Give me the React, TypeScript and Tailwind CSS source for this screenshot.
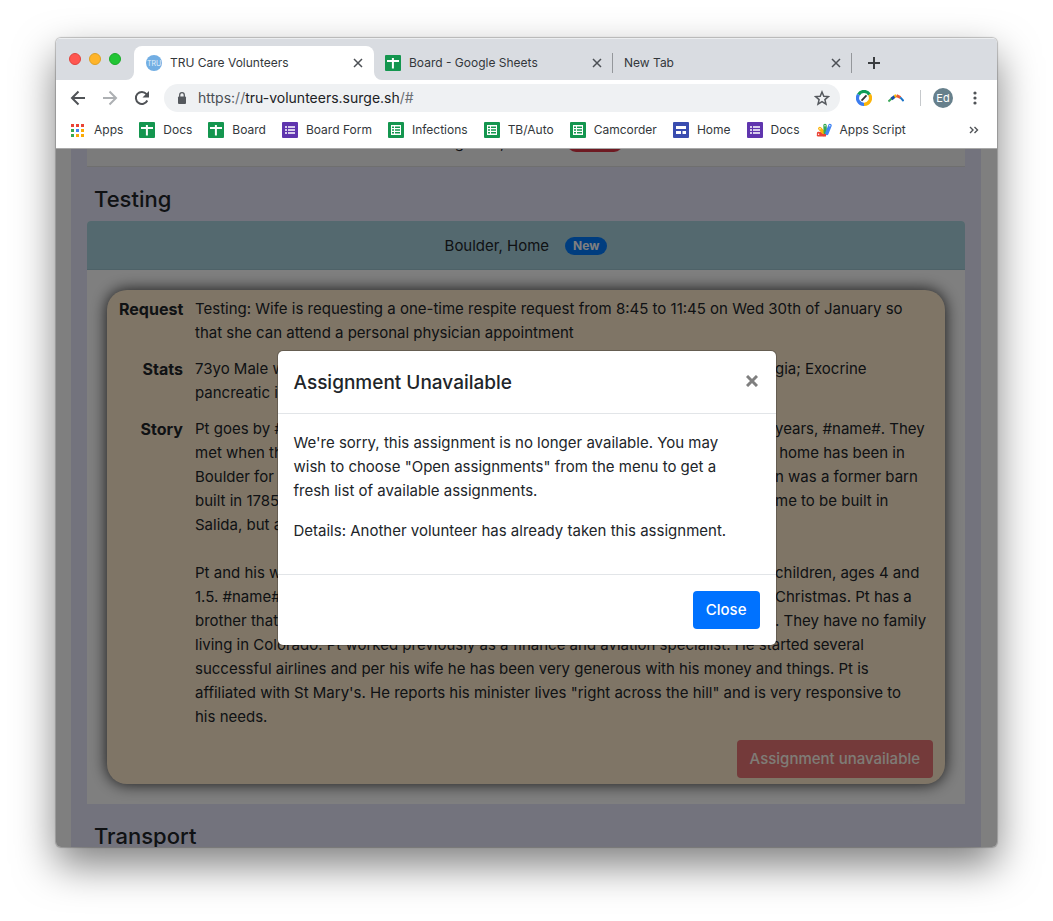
import React from "react";
import type { ReactNode } from "react";

function SheetsAppIcon() {
  return (
    <svg viewBox="0 0 16 16" className="size-4 shrink-0" aria-hidden="true">
      <rect width="16" height="16" rx="1" fill="#14964f" />
      <path d="M2 5.9h12M7.9 3v10.5" stroke="#fff" strokeWidth="2" fill="none" />
    </svg>
  );
}

function SheetIcon() {
  return (
    <svg viewBox="0 0 16 16" className="size-4 shrink-0" aria-hidden="true">
      <rect width="16" height="16" rx="1" fill="#14964f" />
      <path d="M3 3h10v10H3z" fill="#fff" />
      <path d="M4 5.2h2M7 5.2h5M4 8h2M7 8h5M4 10.8h2M7 10.8h5" stroke="#14964f" strokeWidth="1.6" />
    </svg>
  );
}

function FormIcon() {
  return (
    <svg viewBox="0 0 16 16" className="size-4 shrink-0" aria-hidden="true">
      <rect width="16" height="16" rx="1" fill="#5f35ae" />
      <path d="M3 5h2M6 5h7M3 8h2M6 8h7M3 11h2M6 11h7" stroke="#fff" strokeWidth="1.7" />
    </svg>
  );
}

function SitesIcon() {
  return (
    <svg viewBox="0 0 16 16" className="size-4 shrink-0" aria-hidden="true">
      <rect width="16" height="16" rx="1" fill="#3a4db0" />
      <path d="M3 4h10v3H3zM3 9h5v3H3zM9.500 9H13v3H9.500z" fill="#fff" />
    </svg>
  );
}

function AppsIcon() {
  const colors = ["#ea4335", "#ea4335", "#ea4335", "#34a853", "#4285f4", "#fbab05", "#34a853", "#fbab05", "#fbab05"];
  return (
    <svg viewBox="0 0 13 13" className="size-[13px] shrink-0" aria-hidden="true">
      {colors.map((c, i) => (
        <rect key={i} x={(i % 3) * 5} y={Math.floor(i / 3) * 5} width="3" height="3" fill={c} />
      ))}
    </svg>
  );
}

function ScriptIcon() {
  return (
    <svg viewBox="0 0 16 16" className="size-4 shrink-0" aria-hidden="true">
      <g fill="none" strokeLinecap="round" strokeWidth="3.4">
        <path d="M2.500 11.500 8 12.500" stroke="#ea4335" />
        <path d="M3.800 6.500 8.500 11.500" stroke="#fbb40a" />
        <path d="M9 3.500 9.300 11" stroke="#34a853" />
        <path d="M14 3.500 10.800 11.500" stroke="#4285f4" />
      </g>
      <path d="M1.500 12h8.500v2.500H2a1.300 1.300 0 0 1-.5-2.500z" fill="#ea4335" />
      <g fill="#fff">
        <circle cx="2.600" cy="12.300" r=".7" />
        <circle cx="4" cy="6.700" r=".7" />
        <circle cx="9" cy="3.700" r=".7" />
        <circle cx="13.800" cy="3.700" r=".7" />
      </g>
    </svg>
  );
}

function CloseGlyph() {
  return (
    <svg viewBox="0 0 10 10" className="size-[10px]" aria-hidden="true">
      <path d="M1 1l8 8M9 1L1 9" stroke="#4c5055" strokeWidth="1.500" />
    </svg>
  );
}

function Tab({ icon, title, active }: { icon?: ReactNode; title: string; active?: boolean }) {
  return (
    <div
      className={
        active
          ? "relative flex h-[34px] w-60 items-center rounded-t-lg bg-white pr-[11px] pl-3"
          : "flex h-[34px] w-[239px] items-center pr-[11px] pl-[11px]"
      }
    >
      {active && (
        <>
          <svg viewBox="0 0 8 8" className="absolute bottom-0 -left-2 size-2" aria-hidden="true">
            <path d="M8 0v8H0a8 8 0 0 0 8-8z" fill="#fff" />
          </svg>
          <svg viewBox="0 0 8 8" className="absolute -right-2 bottom-0 size-2" aria-hidden="true">
            <path d="M0 0v8h8a8 8 0 0 1-8-8z" fill="#fff" />
          </svg>
        </>
      )}
      {icon && <span className="mr-2">{icon}</span>}
      <span className="flex-1 whitespace-nowrap">{title}</span>
      <button type="button" aria-label={`Close ${title}`} className="flex">
        <CloseGlyph />
      </button>
    </div>
  );
}

function Browser({ children }: { children: ReactNode }) {
  const bookmarks: { icon: ReactNode; label: string }[] = [
    { icon: <AppsIcon />, label: "Apps" },
    { icon: <SheetsAppIcon />, label: "Docs" },
    { icon: <SheetsAppIcon />, label: "Board" },
    { icon: <FormIcon />, label: "Board Form" },
    { icon: <SheetIcon />, label: "Infections" },
    { icon: <SheetIcon />, label: "TB/Auto" },
    { icon: <SheetIcon />, label: "Camcorder" },
    { icon: <SitesIcon />, label: "Home" },
    { icon: <FormIcon />, label: "Docs" },
    { icon: <ScriptIcon />, label: "Apps Script" },
  ];
  return (
    <div className="flex min-h-0 flex-1 flex-col overflow-hidden rounded-[5px] bg-white shadow-[0_0_1px_1px_rgba(0,0,0,0.22),0_18px_40px_rgba(0,0,0,0.5)]">
      <header className="text-xs text-[#33373b]">
        <div className="flex h-[42px] items-end border-t border-[#eceef0] bg-[#d9dce1]">
          <div className="flex gap-2 self-center px-[13px] pb-[2px]">
            <button type="button" aria-label="Close window" className="size-3 rounded-full border border-[#e0443e] bg-[#ff5650]" />
            <button type="button" aria-label="Minimise window" className="size-3 rounded-full border border-[#dea123] bg-[#ffb429]" />
            <button type="button" aria-label="Zoom window" className="size-3 rounded-full border border-[#1aab29] bg-[#22c535]" />
          </div>
          <Tab
            active
            title="TRU Care Volunteers"
            icon={
              <svg viewBox="0 0 16 16" className="size-4" aria-hidden="true">
                <circle cx="8" cy="8" r="8" fill="#72aee3" />
                <text x="8" y="10.500" textAnchor="middle" fontSize="7" fill="#e4f0fb" fontFamily="Inter">
                  TRU
                </text>
              </svg>
            }
          />
          <Tab title="Board - Google Sheets" icon={<SheetsAppIcon />} />
          <span className="mb-[7px] -ml-px h-5 w-px bg-[#94979b]" />
          <Tab title="New Tab" />
          <span className="mb-[7px] -ml-px h-5 w-px bg-[#94979b]" />
          <button type="button" aria-label="New tab" className="mb-[11px] ml-4 flex">
            <svg viewBox="0 0 12 12" className="size-3" aria-hidden="true">
              <path d="M6 0v12M0 6h12" stroke="#3a3d40" strokeWidth="2" />
            </svg>
          </button>
        </div>
        <div className="flex h-9 items-center">
          <button type="button" aria-label="Back" className="ml-[14px] flex">
            <svg viewBox="0 0 16 16" className="size-4" fill="none" stroke="#505357" strokeWidth="2" aria-hidden="true">
              <path d="M15 8H2.500M8.500 1.500 2 8l6.500 6.500" />
            </svg>
          </button>
          <button type="button" aria-label="Forward" className="ml-4 flex">
            <svg viewBox="0 0 16 16" className="size-4" fill="none" stroke="#adb0b3" strokeWidth="2" aria-hidden="true">
              <path d="M1 8h12.500M7.500 1.500 14 8l-6.500 6.500" />
            </svg>
          </button>
          <button type="button" aria-label="Reload" className="ml-4 flex">
            <svg viewBox="0 0 16 16" className="size-4" fill="none" aria-hidden="true">
              <path d="M13.300 10.500a6 6 0 1 1-.8-6.400L14 5.500" stroke="#505357" strokeWidth="2" />
              <path d="M15 1v6.500H8.500z" fill="#505357" />
            </svg>
          </button>
          <div className="ml-[14px] flex h-7 flex-1 items-center rounded-full bg-[#eff1f3] pr-[10px] pl-[13px]">
            <svg viewBox="0 0 10 12" className="h-3 w-[10px]" aria-hidden="true">
              <rect x="1" y="4.500" width="8" height="7.500" rx="1" fill="#55595e" />
              <path d="M2.700 5V3a2.300 2.300 0 0 1 4.600 0v2" stroke="#55595e" strokeWidth="1.300" fill="none" />
            </svg>
            <span className="ml-[11px] flex-1 text-sm text-[#6a6e73]">
              <span className="text-[#4a4e53]">https:</span>//
              <span className="text-[#202124]">tru-volunteers.surge.sh</span>/#
            </span>
            <svg viewBox="0 0 16 16" className="size-4" fill="none" stroke="#55595e" strokeWidth="1.500" aria-hidden="true">
              <path d="M8 2l1.800 4.200 4.600.4-3.500 3 1.100 4.500L8 11.700l-4 2.400 1.100-4.500-3.500-3 4.600-.4z" />
            </svg>
          </div>
          <svg viewBox="0 0 16 16" className="ml-4 size-4" fill="none" strokeWidth="3.200" aria-hidden="true">
            <path d="M2.500 4.600A6.400 6.400 0 0 1 13.500 4.600" stroke="#0f9d58" />
            <path d="M13.500 4.600A6.400 6.400 0 0 1 8 14.400" stroke="#fbb40a" />
            <path d="M8 14.400A6.400 6.400 0 0 1 2.500 4.600" stroke="#3b7cf0" />
            <path d="M5.500 10.700l5-5.400" stroke="#333" strokeWidth="1.800" />
          </svg>
          <svg viewBox="0 0 16 16" className="ml-4 size-4" fill="none" strokeWidth="3" aria-hidden="true">
            <path d="M.4 11.500 4 8.300" stroke="#3aa757" strokeWidth="2" />
            <path d="M3.500 9 6.800 6.300" stroke="#174ea6" />
            <path d="M6.500 6.500 8.500 5.700" stroke="#fbbc04" />
            <path d="M8.500 5.700 12.500 7.500" stroke="#ea5a35" />
            <path d="M12.300 7.300 15.600 11" stroke="#1a73c8" strokeWidth="2" />
          </svg>
          <span className="ml-4 h-4 w-px bg-[#c6c9cc]" />
          <span className="ml-3 flex size-5 items-center justify-center rounded-full bg-[#67808c] text-[11px] text-white">
            Ed
          </span>
          <button type="button" aria-label="Menu" className="mr-5 ml-5 flex">
            <svg viewBox="0 0 4 14" className="h-[14px] w-1" fill="#505357" aria-hidden="true">
              <circle cx="2" cy="2" r="1.600" />
              <circle cx="2" cy="7" r="1.600" />
              <circle cx="2" cy="12" r="1.600" />
            </svg>
          </button>
        </div>
        <nav className="flex h-[33px] items-center gap-4 border-b border-[#a8a8a8] pr-[18px] pb-1 pl-[15px]">
          {bookmarks.map((b, i) => (
            <a key={i} href="#" className="flex items-center gap-2 whitespace-nowrap first:gap-[10px]">
              {b.icon}
              {b.label}
            </a>
          ))}
          <button type="button" aria-label="More bookmarks" className="ml-auto flex">
            <svg viewBox="0 0 10 8" className="h-2 w-[10px]" fill="none" stroke="#505357" strokeWidth="1.400" aria-hidden="true">
              <path d="M1 1l3 3-3 3M5.500 1l3 3-3 3" />
            </svg>
          </button>
        </nav>
      </header>
      {children}
    </div>
  );
}

function CardHeader({ place, badge, tone, badgeTone }: { place: string; badge: string; tone: string; badgeTone: string }) {
  return (
    <div className={`flex h-12 items-center justify-center gap-4 pt-[2px] ${tone}`}>
      <span>{place}</span>
      <span className={`rounded-full px-2 py-[3px] text-xs leading-3 font-bold text-white ${badgeTone}`}>{badge}</span>
    </div>
  );
}

type Line = string | [start: string, end: string];

function Lines({ lines }: { lines: Line[] }) {
  return (
    <p className="whitespace-pre">
      {lines.map((line, i) =>
        typeof line === "string" ? (
          <span key={i} className="block">
            {line}
          </span>
        ) : (
          <span key={i} className="flex">
            <span className="w-[580px] shrink-0">{line[0]}</span>
            <span>{line[1]}</span>
          </span>
        ),
      )}
    </p>
  );
}

function Page() {
  return (
    <main className="-mt-[31px] mr-4 ml-[15px] bg-[#e6e6fa] px-4 text-[15px] leading-6 text-[#212529]">
      <div className="border-b border-[#dfdfdf] bg-white">
        <CardHeader place="Longmont, Home" badge="Closed" tone="bg-[#f7f7f7]" badgeTone="bg-[#dc3545]" />
      </div>
      <h2 className="mt-[18px] mb-[7px] pl-[7px] text-[22px] leading-[29px] font-medium">Testing</h2>
      <section className="overflow-hidden rounded-t bg-white">
        <div className="border-b border-[#9dc4d0]">
          <CardHeader place="Boulder, Home" badge="New" tone="bg-[#a8d2de]" badgeTone="bg-[#007bff]" />
        </div>
        <div className="p-5">
          <div className="rounded-[20px] bg-[#ffebcd] px-3 pt-[7px] pb-[6px] shadow-[0_0_16px_rgba(0,0,0,0.85)]">
            <dl className="grid grid-cols-[64px_1fr] gap-3">
              <dt className="text-right text-base font-bold">Request</dt>
              <dd>
                <Lines
                  lines={[
                    "Testing: Wife is requesting a one-time respite request from 8:45 to 11:45 on Wed 30th of January so",
                    "that she can attend a personal physician appointment",
                  ]}
                />
              </dd>
              <dt className="text-right text-base font-bold">Stats</dt>
              <dd>
                <Lines lines={[["73yo Male w", "gia; Exocrine"], "pancreatic i"]} />
              </dd>
              <dt className="text-right text-base font-bold">Story</dt>
              <dd className="space-y-6">
                <Lines
                  lines={[
                    ["Pt goes by #", "years, #name#. They"],
                    ["met when th", " home has been in"],
                    ["Boulder for", "n was a former barn"],
                    ["built in 1785", "me to be built in"],
                    "Salida, but a",
                  ]}
                />
                <Lines
                  lines={[
                    ["Pt and his w", "children, ages 4 and"],
                    ["1.5. #name#", "Christmas. Pt has a"],
                    ["brother that", ". They have no family"],
                    "living in Colorado. Pt worked previously as a finance and aviation specialist. He started several",
                    "successful airlines and per his wife he has been very generous with his money and things. Pt is",
                    "affiliated with St Mary's. He reports his minister lives \"right across the hill\" and is very responsive to",
                    "his needs.",
                  ]}
                />
              </dd>
            </dl>
            <div className="mt-[11px] flex justify-end">
              <button type="button" disabled className="h-[38px] rounded bg-[#dc3545] px-[13px] font-medium text-white opacity-65">
                Assignment unavailable
              </button>
            </div>
          </div>
        </div>
      </section>
      <h2 className="mt-[18px] mb-[7px] pl-[7px] text-[22px] leading-[29px] font-medium">Transport</h2>
      <div className="h-12 bg-white" />
    </main>
  );
}

function AssignmentDialog() {
  return (
    <div
      role="dialog"
      aria-modal="true"
      aria-labelledby="dialog-title"
      className="w-[500px] rounded-md border border-black/20 bg-white bg-clip-padding text-[15px] leading-6 text-[#212529]"
    >
      <div className="flex items-center justify-between border-b border-[#e2e5e8] px-4 pt-[17px] pb-[15px]">
        <h5 id="dialog-title" className="text-[19px] leading-[30px] font-medium">
          Assignment Unavailable
        </h5>
        <button type="button" aria-label="Close dialog" className="mr-[2px] mb-1 flex">
          <svg viewBox="0 0 12 12" className="size-3" aria-hidden="true">
            <path d="M1 1l10 10M11 1L1 11" stroke="#7f7f7f" strokeWidth="3" />
          </svg>
        </button>
      </div>
      <div className="space-y-4 px-4 pt-[17px] pb-[31px]">
        <p>
          We're sorry, this assignment is no longer available. You may
          <br />
          wish to choose "Open assignments" from the menu to get a
          <br />
          fresh list of available assignments.
        </p>
        <p>Details: Another volunteer has already taken this assignment.</p>
      </div>
      <div className="flex justify-end border-t border-[#e2e5e8] p-4">
        <button type="button" className="h-[38px] rounded bg-[#0072ff] px-[13px] font-medium text-white">
          Close
        </button>
      </div>
    </div>
  );
}

export default function App() {
  return (
    <div className="flex h-screen flex-col bg-white px-14 pt-[38px] pb-[74px] font-['Inter',sans-serif]">
      <Browser>
        <div className="relative min-h-0 flex-1 overflow-hidden">
          <Page />
          <div className="absolute inset-0 flex items-center justify-center bg-black/50">
            <AssignmentDialog />
          </div>
        </div>
      </Browser>
    </div>
  );
}
